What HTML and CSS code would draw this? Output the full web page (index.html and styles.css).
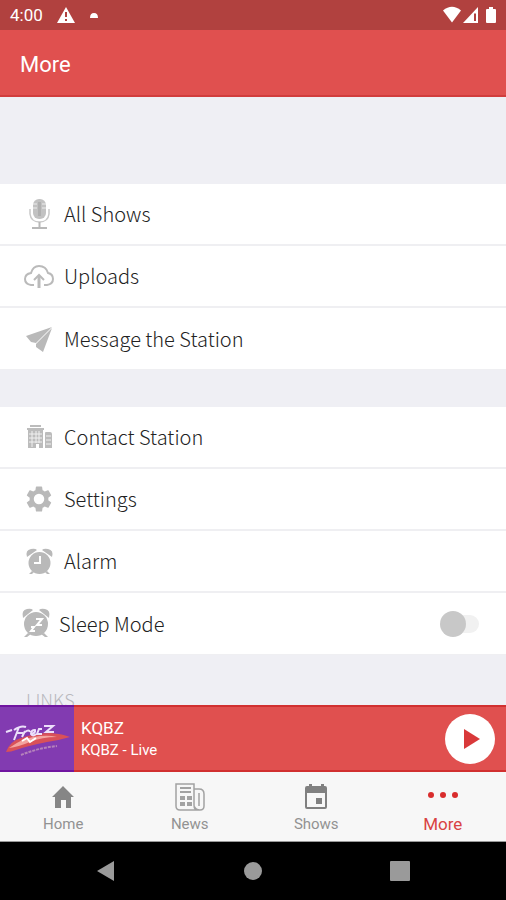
FILE: index.html
```html
<!DOCTYPE html>
<html lang="en">
<head>
<meta charset="utf-8">
<meta name="viewport" content="width=device-width, initial-scale=1">
<title>More</title>
<link rel="stylesheet" href="styles.css">
</head>
<body>
<div class="status-bar">
  <span class="clock">4:00</span>
  <svg class="warning" width="18" height="16" viewBox="0 0 18 16" aria-hidden="true"><path d="M9 0 18 16H0Z" fill="#fff"/><path d="M8 5h2v5H8zM8 12h2v2H8z" fill="#b1413f"/></svg>
  <svg class="cap" width="8" height="5" viewBox="0 0 8 5" aria-hidden="true"><path d="M0 5Q0 0 4 0T8 5Z" fill="#fff"/></svg>
  <svg class="signals" width="56" height="18" viewBox="0 0 56 18" aria-hidden="true"><g fill="#fff"><path d="M1 4.500Q10-3 19 4.500L10 16.500Z"/><path d="M36 1V17H21Z"/><path d="M47 1h4v2h2q1 0 1 1v12q0 1-1 1h-8q-1 0-1-1V4q0-1 1-1h2Z"/></g><path d="M32 7.500V15h2V7.500Z" fill="#b1413f"/></svg>
</div>
<header class="app-bar"><h1>More</h1></header>
<main class="content">
  <nav class="group" aria-label="Station">
    <a class="row" href="#shows-all">
      <svg class="icon" width="30" height="32" viewBox="0 0 30 32" aria-hidden="true"><rect x="9" y="1" width="13" height="20" rx="6" fill="#c2c2c2"/><path d="M9 6h4M9 10h4M18 6h4M18 10h4" stroke="#eee"/><path d="M15.500 4v14" stroke="#b0b0b0" stroke-width="3"/><path d="M6 11v5q1 8 9.500 8t9.500-8v-5" fill="none" stroke="#c9c9c9" stroke-width="1.500"/><path d="M15.500 24v5M8 30h15" stroke="#b8b8b8" stroke-width="2"/></svg>
      <span>All Shows</span>
    </a>
    <a class="row" href="#uploads">
      <svg class="icon" width="30" height="32" viewBox="0 0 30 32" aria-hidden="true"><path d="M10 25H7Q1 24 1 19t6-6Q9 6 15 6q7 0 9 7 5 1 5 6t-6 6h-3M10 20l5-5 5 5" fill="none" stroke="#bababa" stroke-width="2"/><path d="M15 28V16" stroke="#bababa" stroke-width="3"/></svg>
      <span>Uploads</span>
    </a>
    <a class="row" href="#message">
      <svg class="icon" width="30" height="32" viewBox="0 0 30 32" aria-hidden="true"><path d="M28 4 2 13l5 6 5 1Zm0 1L12 21l0 3 7 5Z" fill="#b9b9b9"/></svg>
      <span>Message the Station</span>
    </a>
  </nav>
  <nav class="group" aria-label="Preferences">
    <a class="row" href="#contact">
      <svg class="icon" width="30" height="32" viewBox="0 0 30 32" aria-hidden="true"><path d="M6 5h11M3 8h17" stroke="#bcbcbc" stroke-width="2"/><path d="M4 9h15v18h-4v-4h-3v4H4ZM21 12q0-1 1-1h4q2 0 2 2v14h-7Z" fill="#bcbcbc"/><path d="M5 13h13M5 17h13M5 21h13M8 10v16M12 10v12M15 10v12M22 15h5M22 19h5M22 23h5" stroke="#f1f1f1"/></svg>
      <span>Contact Station</span>
    </a>
    <a class="row" href="#settings">
      <svg class="icon" width="30" height="32" viewBox="0 0 24 24" aria-hidden="true"><path fill="#b9b9b9" d="M19.430 12.980c.04-.32.070-.64.070-.98s-.03-.66-.07-.98l2.110-1.650a.5.5 0 0 0 .12-.64l-2-3.460a.5.5 0 0 0-.61-.22l-2.490 1a7.300 7.300 0 0 0-1.690-.98l-.38-2.650A.49.490 0 0 0 14 2h-4a.49.490 0 0 0-.49.420l-.38 2.650c-.61.250-1.170.59-1.690.98l-2.490-1a.5.5 0 0 0-.61.220l-2 3.460a.5.5 0 0 0 .12.640l2.110 1.650a7.900 7.900 0 0 0 0 1.960l-2.110 1.650a.5.5 0 0 0-.12.640l2 3.460c.12.220.39.300.61.220l2.490-1c.52.400 1.080.73 1.690.98l.38 2.650c.03.240.24.420.49.420h4c.25 0 .46-.18.490-.42l.38-2.650a7.300 7.300 0 0 0 1.690-.98l2.490 1c.23.080.49 0 .61-.22l2-3.460a.5.5 0 0 0-.12-.64ZM12 16.200a4.200 4.200 0 1 1 0-8.400 4.200 4.200 0 0 1 0 8.400Z"/></svg>
      <span>Settings</span>
    </a>
    <a class="row" href="#alarm">
      <svg class="icon" width="30" height="32" viewBox="0 0 30 32" aria-hidden="true"><g fill="#b9b9b9"><circle cx="15.500" cy="18" r="11"/><path d="M3 12Q1 5 7 4q4-1 6 1ZM28 12Q30 5 24 4q-4-1-6 1ZM8 26l-3 3h3l2-2ZM23 26l3 3h-3l-2-2Z"/></g><path d="M16 11v7h-6" fill="none" stroke="#fff" stroke-width="2"/></svg>
      <span>Alarm</span>
    </a>
    <label class="row sleep">
      <svg class="icon" width="30" height="32" viewBox="0 0 30 32" aria-hidden="true"><g fill="#b9b9b9"><circle cx="15" cy="16" r="12"/><path d="M2 10Q0 2 6 1q4-1 6 1ZM28 10Q30 2 24 1q-4-1-6 1ZM7 25l-4 4h3l4-3ZM23 25l4 4h-3l-4-3Z"/></g><path d="M15 11h6l-5 6h5M10 19h3l-3 4h4" fill="none" stroke="#fff" stroke-width="2"/></svg>
      <span>Sleep Mode</span>
      <input class="switch" type="checkbox" role="switch">
    </label>
  </nav>
  <h2 class="section-title">LINKS</h2>
</main>
<section class="player" aria-label="Now playing">
  <svg class="cover" width="74" height="67" viewBox="0 0 74 67" role="img" aria-label="Breeze"><path d="M0 0h74v67H0Z" fill="#823bb1"/><path d="M0 0h74v2H0ZM0 65h74v2H0Z" fill="#7015a0"/><path d="M6 47Q10 36 21 33q15-5 30-5 12 1 19 4-10 3-23 5-20 4-31 8-5 2-10 2Z" fill="#d95158"/><path d="M9 43q15-11 31-12 10-1 17 1-15 0-27 5-12 5-21 6Z" fill="#f3a49f"/><path d="m22 36 5-3 3 4 6-4" fill="none" stroke="#fff" stroke-width="2"/><path d="M6 27l6-2M14 25q7-5 12-3M19 22l-5 13M16 28h7M25 26l-3 6M25 27q4-3 5 0M31 29q5-1 4-4-4 0-4 4 2 3 5 0M42 24h-3l-2 5h5M44 21h9l-7 6h8" fill="none" stroke="#ece0fa" stroke-width="2"/><path d="M21 50q17-7 36-9" fill="none" stroke="#b582bb" stroke-width="2" stroke-dasharray="3 1"/></svg>
  <div class="track"><strong>KQBZ</strong><span>KQBZ - Live</span></div>
  <button class="play" type="button" aria-label="Play"><svg width="16" height="20" viewBox="0 0 16 20" aria-hidden="true"><path d="M0 0 16 10 0 20Z" fill="#d9393a"/></svg></button>
</section>
<nav class="tabs" aria-label="Main">
  <a class="tab" href="#home"><svg width="30" height="30" viewBox="0 0 30 30" aria-hidden="true"><path d="M15 4 26 15h-3v11h-5v-8h-5v8H7V15H4Z" fill="#868686"/></svg><span>Home</span></a>
  <a class="tab" href="#news"><svg width="30" height="30" viewBox="0 0 30 30" aria-hidden="true"><g fill="none" stroke="#a2a2a2"><path d="M1 2h18v21q0 5 4 5H5q-4 0-4-4ZM19 7h5q5 0 5 5v12q0 4-4 4t-6-4M24 11v13" stroke-width="1.500"/><path d="M5 6h11M5 10h11" stroke-width="2"/></g><path d="M5 14h5v4H5ZM12 14h5v4h-5ZM5 20h5v4H5ZM12 20h5v4h-5Z" fill="#a2a2a2"/></svg><span>News</span></a>
  <a class="tab" href="#shows"><svg width="30" height="30" viewBox="0 0 30 30" aria-hidden="true"><path d="M8 2h3v2h9V2h3v2h1q2 0 2 2v19q0 2-2 2H6q-2 0-2-2V6q0-2 2-2h2ZM6 11v14h18V11Z" fill="#808080" fill-rule="evenodd"/><path d="M15 16h6v6h-6Z" fill="#808080"/></svg><span>Shows</span></a>
  <a class="tab active" href="#more" aria-current="page"><svg width="30" height="30" viewBox="0 0 30 30" aria-hidden="true"><g fill="#d92d2d"><circle cx="3" cy="13" r="3"/><circle cx="15" cy="13" r="3"/><circle cx="27" cy="13" r="3"/></g></svg><span>More</span></a>
</nav>
<div class="system-nav">
  <button type="button" aria-label="Back"><svg width="20" height="22" viewBox="0 0 20 22"><path d="M18 1v20L1 11Z" fill="#9a9a9a"/></svg></button>
  <button type="button" aria-label="Home"><svg width="20" height="20" viewBox="0 0 20 20"><circle cx="10" cy="10" r="9" fill="#9a9a9a"/></svg></button>
  <button type="button" aria-label="Recent apps"><svg width="20" height="20" viewBox="0 0 20 20"><rect width="20" height="20" rx="1" fill="#9a9a9a"/></svg></button>
</div>
</body>
</html>
```
FILE: styles.css
```css
* {
  box-sizing: border-box;
}

body {
  margin: 0;
  height: 100vh;
  display: flex;
  flex-direction: column;
  background: #efeff4;
  color: #222;
  font-family: Roboto, "Liberation Sans", sans-serif;
}

a {
  color: inherit;
  text-decoration: none;
}

button {
  border: 0;
  padding: 0;
  display: grid;
  place-items: center;
  background: none;
}

svg {
  display: block;
  flex: none;
}

.status-bar {
  flex: none;
  height: 30px;
  padding: 0 8px 0 10px;
  display: flex;
  align-items: center;
  background: #b1413f;
  color: #fff;
  font-size: 17px;
}

.warning {
  margin-left: 14px;
}

.cap {
  margin-left: 15px;
}

.signals {
  margin-left: auto;
}

.app-bar {
  flex: none;
  height: 67px;
  padding: 4px 20px 0;
  display: flex;
  align-items: center;
  background: #e0504f;
  border-bottom: 2px solid #d13d3d;
  color: #fff;
}

.app-bar h1 {
  margin: 0;
  font-size: 22px;
  font-weight: 400;
}

.content {
  flex: 1;
  min-height: 0;
  overflow: hidden;
  padding-top: 87px;
  font-family: "Noto Sans CJK SC", "Noto Sans", sans-serif;
}

.group {
  margin-bottom: 37px;
}

.row {
  height: 62px;
  padding: 0 27px 0 24px;
  display: flex;
  align-items: center;
  gap: 10px;
  background: #fff;
  border-bottom: 2px solid #efeff2;
  font-size: 20px;
  font-weight: 300;
  line-height: 26px;
}

.row:last-child {
  border-bottom-width: 1px;
}

.sleep {
  padding-left: 21px;
  gap: 8px;
}

.switch {
  appearance: none;
  position: relative;
  width: 39px;
  height: 26px;
  margin: 0 0 0 auto;
}

.switch::before,
.switch::after {
  content: "";
  position: absolute;
}

.switch::before {
  inset: 4px 0 4px 8px;
  border-radius: 9px;
  background: #f1f1f1;
}

.switch::after {
  inset: 0 auto 0 0;
  width: 26px;
  border-radius: 50%;
  background: #c8c8c8;
}

.section-title {
  margin: 0;
  padding: 0 26px;
  color: #b9b9be;
  font-size: 18px;
  font-weight: 300;
  line-height: 14px;
}

.player {
  flex: none;
  height: 67px;
  padding-right: 11px;
  display: flex;
  align-items: center;
  background: #e0504f;
  border-block: 2px solid #d13030;
  color: #fff;
}

.cover {
  margin-block: -2px;
}

.track {
  flex: 1;
  padding-left: 7px;
  display: flex;
  flex-direction: column;
}

.track strong {
  font-size: 17px;
  font-weight: 400;
  line-height: 22px;
}

.track span {
  font-size: 15px;
  line-height: 22px;
}

.play {
  width: 50px;
  height: 50px;
  padding-left: 4px;
  border-radius: 50%;
  background: #fff;
}

.tabs {
  flex: none;
  height: 70px;
  padding-top: 10px;
  display: grid;
  grid-template-columns: repeat(4, 1fr);
  background: #f7f7f7;
  border-bottom: 1px solid #999;
}

.tab {
  display: flex;
  flex-direction: column;
  align-items: center;
  gap: 2px;
  color: #929292;
  font-size: 15px;
  line-height: 20px;
}

.active {
  color: #d94343;
  font-size: 17px;
}

.system-nav {
  flex: none;
  height: 58px;
  padding: 0 33px;
  display: grid;
  grid-template-columns: repeat(3, 1fr);
  align-items: center;
  justify-items: center;
  background: #000;
}
```
